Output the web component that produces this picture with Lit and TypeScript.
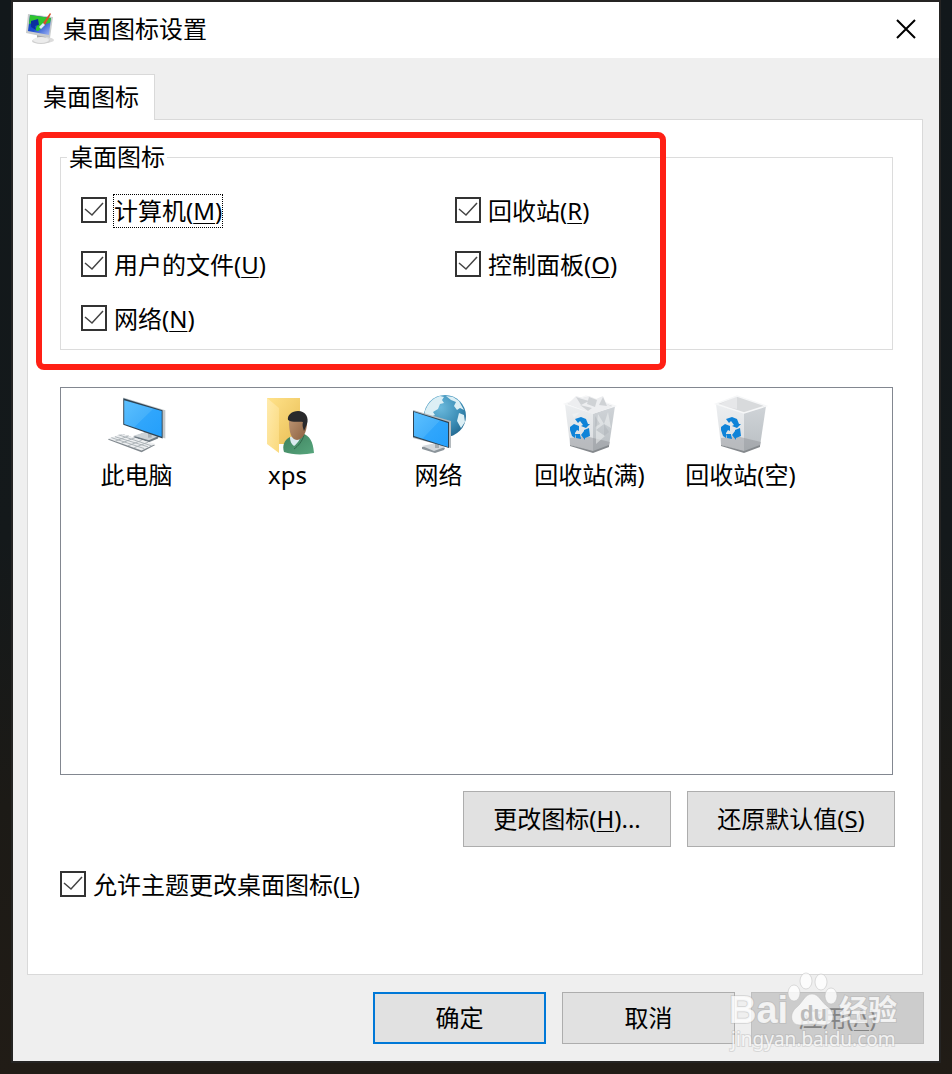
import { LitElement, html, css, svg } from "lit";
import { customElement, state } from "lit/decorators.js";

type Item = { id: string; label: string; key: string; on: boolean; focus?: boolean };

const monitorIcon = html`<svg class="pic" viewBox="-4 -2 70 70" aria-hidden="true">
  <defs>
    <linearGradient id="m" x1="0" y1="0" x2="1" y2="1"><stop offset="0" stop-color="#5cc0ff"/><stop offset=".5" stop-color="#44b0fb"/><stop offset=".51" stop-color="#30a6fc"/><stop offset="1" stop-color="#249ffb"/></linearGradient>
  </defs>
  <path d="M27 48l13-5 15 4-1 3-10 4-16-5z" fill="#6f7a82"/>
  <path d="M27 47l13-4 15 4-11 5z" fill="#cdd3d7"/>
  <path d="M43 43h4v6h-4z" fill="#a9b1b6"/>
  <path d="M16 5l46 14v31L16 34z" fill="#c3c8cb"/>
  <path d="M16 6l43 13v31L16 35z" fill="#2e4353"/>
  <path d="M17 8l41 12v28L17 34z" fill="url(#m)"/>
  <path d="M-1 51l16-6 36 12-15 8z" fill="#80888e"/>
  <path d="M-1 50l16-5 36 11-15 7z" fill="#eceef0"/>
  <path d="M3 49l36 12M7 48l36 11M11 46l36 12M7 53l15-6M14 55l15-6M21 58l15-6M28 60l15-6" stroke="#a9b0b5" stroke-width="1" fill="none"/>
</svg>`;

const userIcon = html`<svg class="pic" viewBox="0 0 64 64" aria-hidden="true">
  <defs>
    <linearGradient id="fb" x1="0" y1="0" x2="1" y2="1"><stop offset="0" stop-color="#ffe28a"/><stop offset="1" stop-color="#e9be55"/></linearGradient>
    <linearGradient id="ff" x1="0" y1="0" x2="1" y2="1"><stop offset="0" stop-color="#ffebae"/><stop offset="1" stop-color="#fad97c"/></linearGradient>
    <linearGradient id="sk" x1="0" y1="0" x2="1" y2="1"><stop offset="0" stop-color="#c29a78"/><stop offset="1" stop-color="#8a5f3f"/></linearGradient>
    <linearGradient id="gr" x1="0" y1="0" x2="1" y2="1"><stop offset="0" stop-color="#3d7f5c"/><stop offset="1" stop-color="#57a67d"/></linearGradient>
  </defs>
  <path d="M11 7h33v46H11z" fill="url(#fb)"/>
  <path d="M11 7l12 10v45L11 53z" fill="url(#ff)"/>
  <path d="M34 46l14-3 3 6-9 10h-8z" fill="#dbeaf0"/>
  <path d="M34 46c-6 3-8 9-6 15 8 3 20 3 30 1-1-12-4-17-12-20-2 7-5 11-8 13-3-2-4-5-4-9z" fill="url(#gr)"/>
  <path d="M48 44c-2 7-6 11-10 14" stroke="#2f674b" stroke-width="1" fill="none"/>
  <path d="M33 31c0-6 4-9 9-9 6 0 9 4 9 10 0 8-4 17-10 17-6 0-8-9-8-18z" fill="url(#sk)"/>
  <path d="M32 29c-1-5 4-9 10-9 8 0 11 7 9 13l-3 7c-1-4-2-5-1-9-4-1-10 1-15-2z" fill="#29292b"/>
</svg>`;

const networkIcon = html`<svg class="pic" viewBox="0 0 64 64" aria-hidden="true">
  <defs>
    <radialGradient id="gl" cx=".4" cy=".3" r=".8"><stop offset="0" stop-color="#6bb9dc"/><stop offset=".6" stop-color="#3a8cb5"/><stop offset="1" stop-color="#1f6289"/></radialGradient>
    <linearGradient id="m2" x1="0" y1="0" x2="1" y2="1"><stop offset="0" stop-color="#5cc0ff"/><stop offset=".5" stop-color="#44b0fb"/><stop offset=".51" stop-color="#30a6fc"/><stop offset="1" stop-color="#249ffb"/></linearGradient>
  </defs>
  <circle cx="38" cy="25" r="21" fill="url(#gl)"/>
  <path d="M18 20c3-8 8-13 15-15l4 1-2 3 2 3-4 1-2 5-5 3 2 3-5 2-5-2zM39 5l7 1 6 4 5 9-4-2-3 2-3-4 2-4-5-2zM52 22l5 2 1 7-4 6-4-7z" fill="#dceff5"/>
  <path d="M15 56l14-3 9 4-1 2-9 3-13-4z" fill="#8b949a"/>
  <path d="M15 55l14-3 9 4-11 4z" fill="#d3d8dc"/>
  <path d="M28 50h4v7h-4z" fill="#a5adb2"/>
  <path d="M6 19l38 11v27L6 47z" fill="#b4babe"/>
  <path d="M6 20l36 11v26L6 46z" fill="#2e4353"/>
  <path d="M7 21l34 11v24L7 45z" fill="url(#m2)"/>
</svg>`;

const arrows = svg`<g fill="#0f83d8">
  <path d="M17 27l6-2 5 2 2 5 2 0-4 4-5-2 2-1-3-4-2 2z"/>
  <path d="M26 38l5-2 1 8-5 2 0 2-4-5 3-4z"/>
  <path d="M12 35l4-3 5 2 0 5-2-1-2 3 0 5-3-2-2-6z"/>
  <path d="M17 42l5 0 1 5-5-1z"/>
</g>`;

const bin = (full: boolean) => html`<svg class="pic" viewBox="0 -1 64 64" aria-hidden="true">
  <defs>
    <linearGradient id="bl" x1="0" y1="0" x2="0" y2="1"><stop offset="0" stop-color="#eceef0"/><stop offset="1" stop-color="#d9dcdf"/></linearGradient>
    <linearGradient id="br" x1="0" y1="0" x2="0" y2="1"><stop offset="0" stop-color="#d0d4d8"/><stop offset="1" stop-color="#b9bec2"/></linearGradient>
  </defs>
  <path d="M7 12L28 4l29 10-22 8z" fill="#d8dadc"/>
  <path d="M28 4v13L9 13z" fill="#e6e7e9"/>
  <path d="M7 12l28 9v39L12 53z" fill="url(#bl)"/>
  <path d="M35 21l22-7-6 40-16 6z" fill="url(#br)"/>
  <path d="M12 46l15-2 25 6-1 4-16 6-23-7z" fill="#8d9195" opacity=".45"/>
  <path d="M12 53l23 6 16-6v2l-16 6-23-7z" fill="#85898d"/>
  <path d="M7 12L28 4l29 10-22 7z" fill="none" stroke="#f6f7f8" stroke-width="1.500"/>
  ${full
    ? svg`<path d="M10 12l8-8 7 2 6-2 7 3 7-3 3 7 6 4-19 7z" fill="#edeef0"/>
      <path d="M18 5l5 8 8-4-7-2zM31 5l-2 7 8 3 2-7zM45 5l-4 8 8 1zM22 13l8 6 4-3z" fill="#cfd2d5"/>
      <path d="M40 22l6 10-8 6zM50 20l-4 12 7 4zM38 38l9 6-9 8zM14 22l8-2-6 6z" fill="#f4f5f6" opacity=".5"/>
      <path d="M46 32l5 8-5 4zM37 24l5 8-5 3z" fill="#a9afb4" opacity=".4"/>`
    : ""}
  ${arrows}
</svg>`;

const appIcon = html`<svg class="app-icon" viewBox="0 0 32 32" aria-hidden="true">
  <defs>
    <linearGradient id="sc" x1="0" y1="0" x2="1" y2="1"><stop offset="0" stop-color="#0a3fb5"/><stop offset=".5" stop-color="#1d4fd0"/><stop offset="1" stop-color="#a8baf4"/></linearGradient>
  </defs>
  <ellipse cx="20" cy="27" rx="9" ry="3" fill="#dcdcdc"/>
  <path d="M12 21l8 1 1 5-9-1z" fill="#a9a9a9"/>
  <ellipse cx="16" cy="28" rx="9" ry="3" fill="#cfcfcf"/>
  <ellipse cx="16" cy="27" rx="8" ry="3" fill="#ececec"/>
  <path d="M3 1l25 3-3 21L1 20z" fill="#c9cccd"/>
  <path d="M5 2l21 3-2 17L3 18z" fill="url(#sc)"/>
  <path d="M5 2l21 3-1 5-5 1-3 4-4 3-3-1 2-4-4-3-4 1z" fill="#2fc62f"/>
  <path d="M6 8l7-2 1 6-4 1 1 4-5-3z" fill="#0a2fa0"/>
  <path d="M18 10l7-10 1 1-6 11z" fill="#d9502c"/>
  <path d="M14 14l4-4 2 2-4 4z" fill="#dfe9f5"/>
</svg>`;

@customElement("app-root")
export class AppRoot extends LitElement {
  static styles = css`
    :host {
      display: block;
      box-sizing: border-box;
      min-height: 100vh;
      padding: 2px 13px 13px;
      background: linear-gradient(#12181b, #14191b 50%, #1c1a16 75%, #211c16);
      color: #000;
      font: 24px/32px "Noto Sans", "Noto Sans CJK SC", sans-serif;
    }
    * { box-sizing: border-box; }
    .window {
      display: flex;
      flex-direction: column;
      min-height: calc(100vh - 15px);
      background: #efefef;
      box-shadow: 0 0 0 2px #252423;
    }
    .title {
      display: flex;
      align-items: center;
      height: 56px;
      padding: 0 16px 2px 12px;
      background: #fff;
    }
    .title h1 { flex: 1; margin: 0 0 0 6px; font: inherit; }
    .app-icon { width: 32px; height: 32px; }
    .close {
      display: grid;
      place-items: center;
      width: 34px;
      height: 34px;
      padding: 0;
      border: 0;
      background: none;
    }
    .close svg { width: 20px; height: 20px; }
    .tabs { display: flex; padding: 16px 14px 0; }
    .tab {
      position: relative;
      z-index: 1;
      height: 46px;
      margin-bottom: -1px;
      padding: 0 15px 2px;
      border: 1px solid #d9d9d9;
      border-bottom: 0;
      background: #fff;
      color: inherit;
      font: inherit;
    }
    .panel {
      flex: 1;
      display: flex;
      flex-direction: column;
      margin: 0 16px 0 14px;
      padding: 21px 27px 73px 32px;
      border: 1px solid #d9d9d9;
      background: #fff;
    }
    .marked { position: relative; margin-right: 2px; }
    .mark {
      position: absolute;
      top: -9px;
      left: -24px;
      width: 630px;
      height: 238px;
      border: 6px solid #ff2015;
      border-radius: 8px;
      pointer-events: none;
    }
    .group {
      display: grid;
      grid-template-columns: 374px 1fr;
      row-gap: 20px;
      min-width: 0;
      margin: 0;
      padding: 20px 20px 14px;
      border: 1px solid #dcdcdc;
    }
    .group legend { margin-left: -14px; padding: 0 2px; }
    .check { display: flex; align-items: center; }
    .check input {
      appearance: none;
      width: 26px;
      height: 26px;
      margin: 0 7px 0 0;
      border: 2px solid #333;
      background: #fff;
    }
    .check input:checked {
      background: url("data:image/svg+xml,%3Csvg xmlns='http://www.w3.org/2000/svg' viewBox='0 0 22 22'%3E%3Cpath d='M2 10l7 6L20 4' fill='none' stroke='%23444' stroke-width='1.500'/%3E%3C/svg%3E") center / 22px 22px no-repeat;
    }
    .check span { margin-top: 2px; outline: 1px dotted transparent; }
    .check .focus { outline-color: #000; }
    u { text-decoration-thickness: 1px; text-underline-offset: 3px; }
    .list {
      flex: 1;
      display: grid;
      grid-template-columns: repeat(auto-fill, 151px);
      align-content: start;
      min-height: 120px;
      margin: 37px 2px 0 0;
      padding: 3px 0 0;
      border: 1px solid #828790;
      list-style: none;
    }
    .list li { display: flex; flex-direction: column; align-items: center; text-align: center; }
    .pic { width: 64px; height: 64px; margin-bottom: 4px; }
    .actions, .footer { display: flex; justify-content: flex-end; gap: 16px; }
    .actions { margin: 16px 0 20px; }
    .btn {
      border: 1px solid #adadad;
      padding: 0;
      background: #e1e1e1;
      color: inherit;
      font: inherit;
    }
    .actions .btn { width: 208px; height: 56px; }
    .footer { position: relative; padding: 17px 15px 17px; }
    .footer .btn { width: 173px; height: 52px; }
    .footer .ok { border: 2px solid #0078d7; }
    .footer .btn:disabled { border-color: #bfbfbf; background: #ccc; color: #838383; }
    .stamp {
      position: absolute;
      right: 36px;
      bottom: 7px;
      width: 180px;
      height: 84px;
      pointer-events: none;
    }
    .stamp text { fill: #fff; fill-opacity: .8; stroke: #aaa; stroke-opacity: .35; stroke-width: 2px; paint-order: stroke; }
    .stamp .brand { font: bold 38px "Liberation Sans", sans-serif; }
    .stamp .brand-cn { font: bold 29px "Noto Sans CJK SC", sans-serif; }
    .stamp .site { font: 19px "Noto Sans", sans-serif; }
    .stamp .paw { fill: #fff; fill-opacity: .8; stroke: #bbb; stroke-opacity: .5; }
    .stamp .du { font: bold 22px "Liberation Sans", sans-serif; fill: #bbb; fill-opacity: 1; stroke: none; }
  `;

  @state() private items: Item[] = [
    { id: "computer", label: "计算机", key: "M", on: true, focus: true },
    { id: "bin", label: "回收站", key: "R", on: true },
    { id: "files", label: "用户的文件", key: "U", on: true },
    { id: "panel", label: "控制面板", key: "O", on: true },
    { id: "network", label: "网络", key: "N", on: true },
  ];

  private icons = [
    { name: "此电脑", pic: monitorIcon },
    { name: "xps", pic: userIcon },
    { name: "网络", pic: networkIcon },
    { name: "回收站(满)", pic: bin(true) },
    { name: "回收站(空)", pic: bin(false) },
  ];

  private check(i: Item) {
    return html`<label class="check" for=${i.id}>
      <input type="checkbox" id=${i.id} .checked=${i.on} />
      <span class=${i.focus ? "focus" : ""}>${i.label}(<u>${i.key}</u>)</span>
    </label>`;
  }

  render() {
    return html`<main class="window">
      <header class="title">
        ${appIcon}
        <h1>桌面图标设置</h1>
        <button class="close" aria-label="关闭">
          <svg viewBox="0 0 20 20"><path d="M1 1l18 18M19 1L1 19" stroke="#000" stroke-width="2" fill="none"/></svg>
        </button>
      </header>
      <div class="tabs" role="tablist"><button class="tab" role="tab" aria-selected="true">桌面图标</button></div>
      <section class="panel" role="tabpanel">
        <div class="marked">
          <fieldset class="group">
            <legend>桌面图标</legend>
            ${this.items.map((i) => this.check(i))}
          </fieldset>
          <div class="mark"></div>
        </div>
        <ul class="list">
          ${this.icons.map((i) => html`<li>${i.pic}<span>${i.name}</span></li>`)}
        </ul>
        <div class="actions">
          <button class="btn">更改图标(<u>H</u>)...</button>
          <button class="btn">还原默认值(<u>S</u>)</button>
        </div>
        ${this.check({ id: "themes", label: "允许主题更改桌面图标", key: "L", on: true })}
      </section>
      <footer class="footer">
        <button class="btn ok">确定</button>
        <button class="btn">取消</button>
        <button class="btn" disabled>应用(<u>A</u>)</button>
        <svg class="stamp" viewBox="0 0 180 84">
          <text class="brand" x="6" y="53">Bai</text>
          <g class="paw">
            <ellipse cx="71" cy="23" rx="6" ry="8"/><ellipse cx="83" cy="11" rx="6" ry="8"/>
            <ellipse cx="98" cy="12" rx="6" ry="8"/><ellipse cx="108" cy="26" rx="6" ry="8"/>
            <path d="M89 24c7 0 9 8 16 13 8 6 6 18-4 18-5 0-8-1-12-1s-7 1-12 1c-10 0-11-12-3-18 6-5 8-13 15-13z"/>
          </g>
          <text class="du" x="77" y="51">du</text>
          <text class="brand-cn" x="116" y="51">经验</text>
          <text class="site" x="8" y="76">jingyan.baidu.com</text>
        </svg>
      </footer>
    </main>`;
  }
}
